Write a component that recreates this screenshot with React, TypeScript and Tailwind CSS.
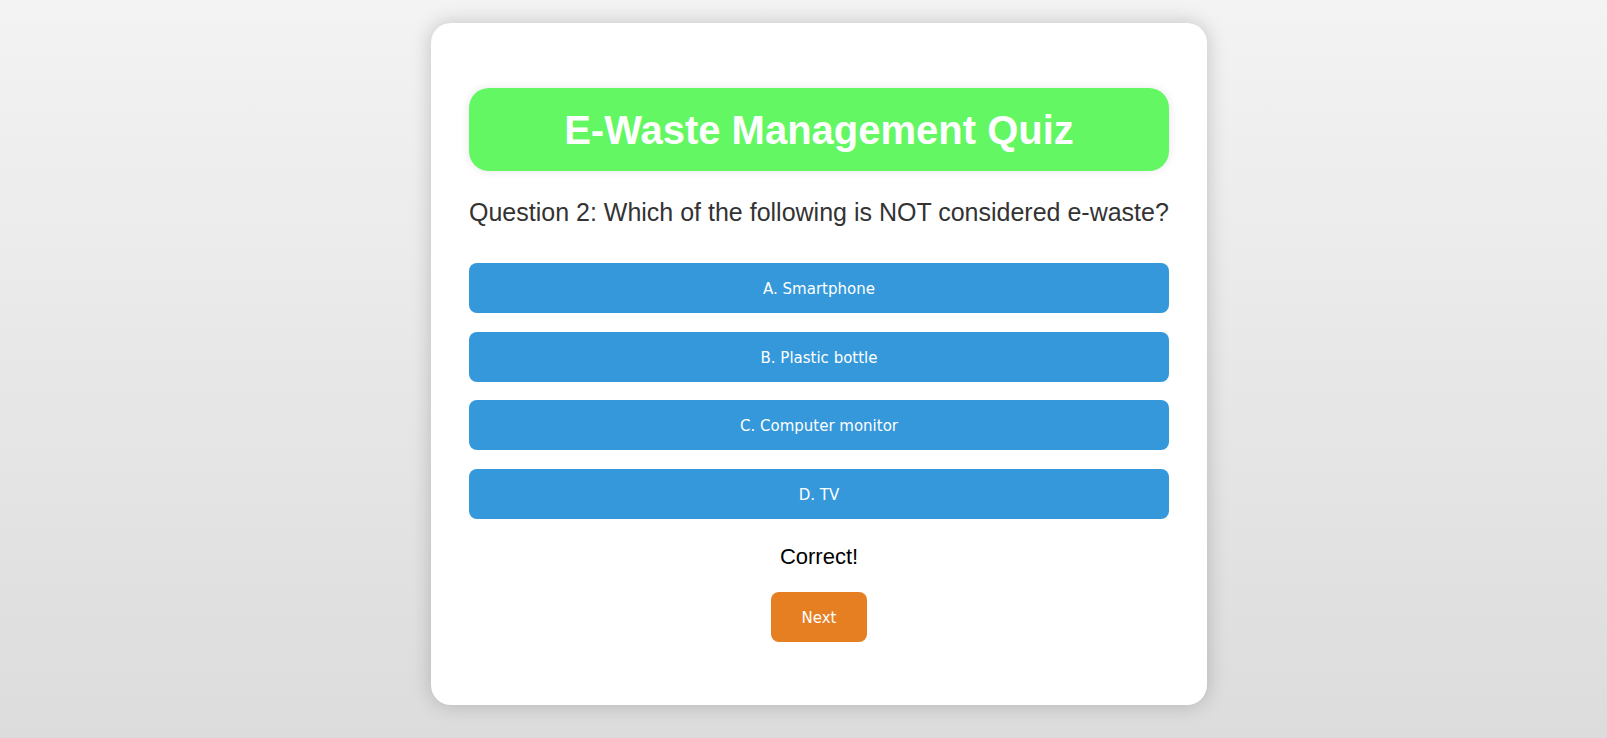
const options = ['A. Smartphone', 'B. Plastic bottle', 'C. Computer monitor', 'D. TV']

export default function App() {
  return (
    <div className="min-h-screen w-full bg-gradient-to-b from-[#f3f3f3] to-[#dcdcdc] flex justify-center pt-[23px] pl-[31px] pb-[34px]">
      <div className="w-[776px] bg-white rounded-[20px] shadow-[0_0_20px_rgba(0,0,0,0.2)] px-[38px] pt-[65px] pb-[63px]">
        <div className="h-[83px] rounded-[20px] bg-[#63f763] shadow-[0_0_10px_rgba(0,0,0,0.1)] flex items-center justify-center">
          <h1 className="text-white text-[40px] font-bold leading-[46px] font-['Liberation_Sans',Arial,sans-serif]">
            E-Waste Management Quiz
          </h1>
        </div>

        <h2 className="mt-[27px] text-[25px] leading-[28px] text-[#333] whitespace-nowrap font-['Liberation_Sans',Arial,sans-serif]">
          Question 2: Which of the following is NOT considered e-waste?
        </h2>

        <div className="mt-[37px] flex flex-col gap-[18.5px]">
          {options.map((opt) => (
            <button
              key={opt}
              className="h-[50px] w-full rounded-[8px] bg-[#3498db] pt-[3px] text-white text-[15px] font-['DejaVu_Sans',Tahoma,sans-serif]"
            >
              {opt}
            </button>
          ))}
        </div>

        <p className="mt-[25px] text-center text-[22px] leading-[26px] text-black font-['Liberation_Sans',Arial,sans-serif]">
          Correct!
        </p>

        <div className="mt-[22.5px] flex justify-center">
          <button className="h-[50px] w-[96px] rounded-[8px] bg-[#e67e22] pt-[2px] text-white text-[15px] font-['DejaVu_Sans',Tahoma,sans-serif]">
            Next
          </button>
        </div>
      </div>
    </div>
  )
}
